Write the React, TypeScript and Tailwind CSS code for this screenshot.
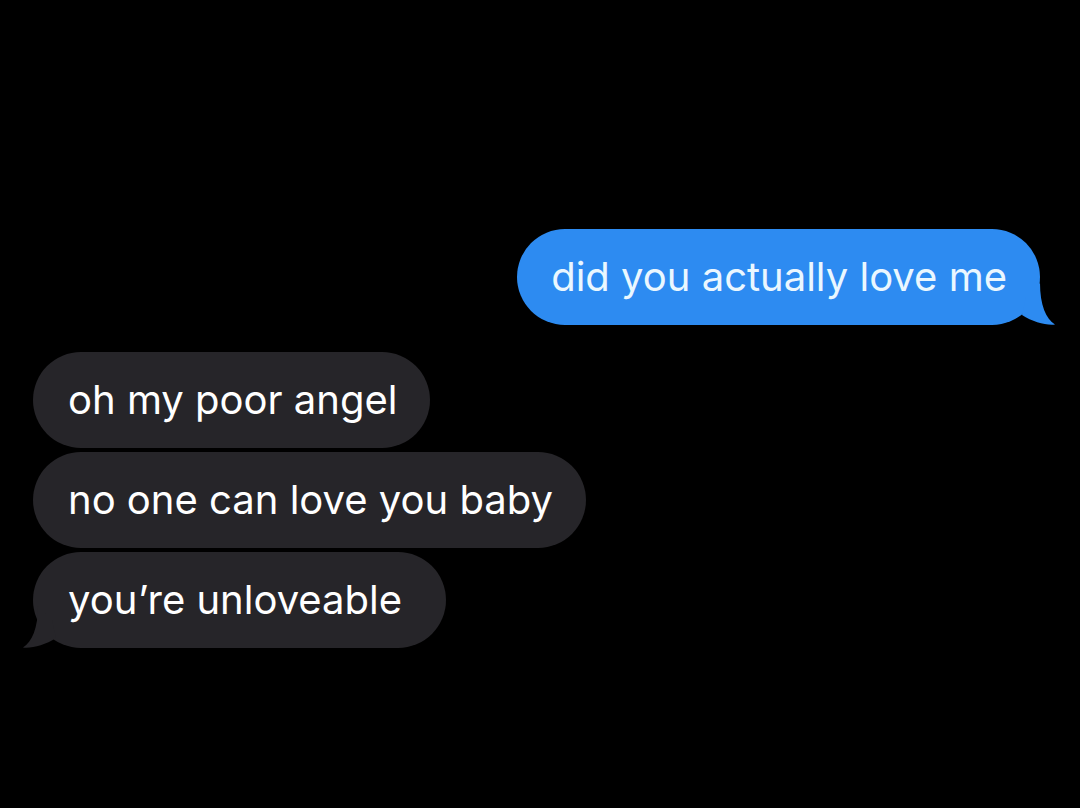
import React from 'react';

const font = { fontFamily: 'Inter, "Liberation Sans", sans-serif' };

// bubble tail, drawn for the right side; flipped for incoming messages
const Tail = ({ color, flip }: { color: string; flip?: boolean }) => (
  <svg
    width="42"
    height="46"
    viewBox="0 0 42 46"
    className={flip ? 'absolute -left-[11px] bottom-0 -scale-x-100' : 'absolute -right-[16px] bottom-0'}
  >
    <path d="M26 4 C26 26 32 40 41 45.5 C32 46.5 19 43 8 36 L12 18 Z" fill={color} />
  </svg>
);

const Incoming = ({ text, tail }: { text: string; tail?: boolean }) => (
  <div
    className={
      'relative self-start h-[96px] flex items-center pl-[35px] rounded-full bg-[#262529] ' +
      (tail ? 'pr-[44px]' : 'pr-[33px]')
    }
  >
    <span className="text-white text-[40px] leading-none" style={font}>{text}</span>
    {tail && <Tail color="#262529" flip />}
  </div>
);

export default function App() {
  return (
    <div className="w-[1080px] h-[808px] bg-black overflow-hidden flex flex-col pt-[229px]">
      {/* sent */}
      <div className="flex justify-end pr-[40px]">
        <div className="relative h-[96px] flex items-center pl-[34px] pr-[33px] rounded-full bg-[#2d8bf1]">
          <span className="text-[#eaf7ff] text-[40px] leading-none" style={font}>did you actually love me</span>
          <Tail color="#2d8bf1" />
        </div>
      </div>

      {/* received */}
      <div className="flex flex-col gap-[4px] pl-[33px] mt-[27px]">
        <Incoming text="oh my poor angel" />
        <Incoming text="no one can love you baby" />
        <Incoming text="you’re unloveable" tail />
      </div>
    </div>
  );
}
